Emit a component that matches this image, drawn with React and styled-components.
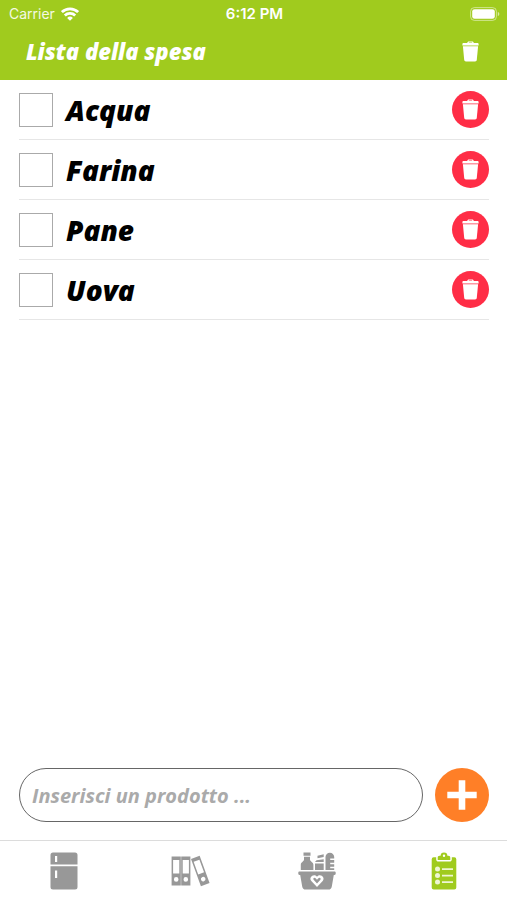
import { useState } from 'react';
import styled, { createGlobalStyle, css } from 'styled-components';

const colors = {
  green: '#a0cb1e',
  red: '#ff2d46',
  orange: '#ff7f27',
  gray: '#989898',
  line: '#e6e6e6',
};

const initialProducts = ['Acqua', 'Farina', 'Pane', 'Uova'];

const TrashIcon = () => (
  <svg width="21" height="21" viewBox="0 0 21 21" fill="currentColor" aria-hidden="true">
    <path d="M7.2 2C7.2.9 8 .4 8.8.4h3.4c.8 0 1.6.5 1.6 1.6h3.6c.8 0 1.2.4 1.2 1.1v1.3H2.4V3.1c0-.7.4-1.1 1.2-1.1zM8.6 2h3.8c0-.4-.3-.6-.6-.6H9.2c-.3 0-.6.2-.6.6z" />
    <path d="M2.9 5.2h15.2l-1.3 13.6c-.1 1-.8 1.6-1.7 1.6H5.9c-.9 0-1.6-.6-1.7-1.6z" />
  </svg>
);

const WifiIcon = () => (
  <svg width="18" height="14" viewBox="0 0 18 14" fill="none" stroke="#fff" strokeWidth="2.8" aria-hidden="true">
    <path d="M.9 5.1a11.6 11.6 0 0 1 16.2 0" />
    <path d="M3.8 8.4a7.5 7.5 0 0 1 10.4 0" />
    <path d="M9 13.8 6.1 11a4.1 4.1 0 0 1 5.8 0z" fill="#fff" stroke="none" />
  </svg>
);

const BatteryIcon = () => (
  <svg width="30" height="14" viewBox="0 0 30 14" fill="none" aria-hidden="true">
    <rect x=".6" y=".6" width="25.8" height="12.8" rx="3.8" stroke="#fff" strokeOpacity=".5" />
    <rect x="2.2" y="2.2" width="22.6" height="9.6" rx="2.4" fill="#fff" />
    <path d="M27.8 5v4c1-.4 1.5-1.1 1.5-2s-.5-1.6-1.5-2z" fill="#fff" fillOpacity=".6" />
  </svg>
);

const PlusIcon = () => (
  <svg width="30" height="30" viewBox="0 0 30 30" fill="currentColor" aria-hidden="true">
    <path d="M11.7.3h6.6v11.4h11.4v6.6H18.3v11.4h-6.6V18.3H.3v-6.6h11.4z" />
  </svg>
);

const FridgeIcon = () => (
  <svg width="40" height="40" viewBox="0 0 40 40" fill="currentColor" aria-hidden="true">
    <path fillRule="evenodd" d="M10 1.5h22A2.5 2.5 0 0 1 34.5 4v9.6h-27V4A2.5 2.5 0 0 1 10 1.5zM12 5v6h2.2V5z" />
    <path fillRule="evenodd" d="M7.5 15.2h27V36a2.5 2.5 0 0 1-2.5 2.5H10A2.5 2.5 0 0 1 7.5 36zM12 19.5V27h2.2v-7.5z" />
  </svg>
);

const Binder = ({ transform }) => (
  <g transform={transform}>
    <path
      fillRule="evenodd"
      d="M0 0h9.2v29H0zM1.5 3.5V17h6.2V3.5zM4.6 20.7a2.3 2.3 0 1 0 0 4.6 2.3 2.3 0 0 0 0-4.6z"
    />
  </g>
);

const BindersIcon = () => (
  <svg width="40" height="40" viewBox="0 0 40 40" fill="currentColor" aria-hidden="true">
    <Binder transform="translate(1.6 5.4)" />
    <Binder transform="translate(11.2 5.4)" />
    <Binder transform="translate(21 8) rotate(-20)" />
  </svg>
);

const BasketIcon = () => (
  <svg width="40" height="40" viewBox="0 0 40 40" fill="currentColor" aria-hidden="true">
    <path d="M6.5 1.5h7v3.2h-7zM7 5.8h6v2.9c0 1.7 3.4 2.3 3.4 5V19H3.8v-5.3C3.8 11 7 10.4 7 8.700z" />
    <path d="M18 12.5h8.7V19H18zM19.5 9.3l7.2-1.100v2.700H18zM20.500 4.700l6.200-1.400v2.600l-6.200 1.400z" />
    <path d="M28.500 19V6a4.300 4.300 0 0 1 8.700 0v1.600h-4v1.500h4v2.600h-4v1.500h4v2.600h-4v1.400h4V19z" />
    <path
      fillRule="evenodd"
      d="M2.500 20.500h35c.7 0 1.200.5 1.200 1.100v1.200c0 .6-.5 1.100-1.200 1.100h-.7l-2 11.500a3.600 3.600 0 0 1-3.600 3.100H8.800a3.600 3.600 0 0 1-3.600-3.100l-2-11.500h-.7c-.7 0-1.200-.5-1.200-1.100v-1.200c0-.6.5-1.100 1.200-1.100zM20 36l5.700-6.100c3-3.200-2.300-8-5.700-4.200-3.400-3.800-8.700 1-5.700 4.200z"
    />
    <path d="M20 32.500l-3.400-3.800c-1-1.400 1-2.800 2.200-1.300l1.200 1.400 1.200-1.400c1.200-1.500 3.200-.1 2.200 1.300z" />
  </svg>
);

const ListIcon = () => (
  <svg width="40" height="40" viewBox="0 0 40 40" aria-hidden="true">
    <path
      fill="currentColor"
      d="M9.7 6.3h2.5v2.2c0 1.3.9 2.1 2.3 2.1h11c1.4 0 2.3-.8 2.3-2.1V6.300h2.5a2 2 0 0 1 2 2v28.200a2 2 0 0 1-2 2H9.700a2 2 0 0 1-2-2V8.300a2 2 0 0 1 2-2z"
    />
    <path
      fill="currentColor"
      fillRule="evenodd"
      d="M13.7 9V6.700c0-1.200.7-1.900 1.900-1.900h1a3.400 3.400 0 0 1 6.800 0h1c1.200 0 1.900.7 1.900 1.900V9zM20 3.500a1.200 1.200 0 1 0 0 2.400 1.200 1.200 0 0 0 0-2.400z"
    />
    <g fill="#eef6d3">
      <circle cx="13.5" cy="18" r="2.5" />
      <circle cx="13.5" cy="24.5" r="2.5" />
      <circle cx="13.5" cy="31" r="2.5" />
      <path d="M18 17.2h11v1.700H18zM18 23.700h11v1.700H18zM18 30.200h11v1.700H18z" />
    </g>
  </svg>
);

const tabs = [
  { id: 'frigo', label: 'Frigo', Icon: FridgeIcon },
  { id: 'archivio', label: 'Archivio', Icon: BindersIcon },
  { id: 'dispensa', label: 'Dispensa', Icon: BasketIcon },
  { id: 'spesa', label: 'Lista della spesa', Icon: ListIcon },
];

const App = () => {
  const [products, setProducts] = useState(initialProducts);
  const [text, setText] = useState('');
  const [activeTab, setActiveTab] = useState('spesa');

  const onSubmit = event => {
    event.preventDefault();
    const name = text.trim();
    if (name && !products.includes(name)) {
      setProducts([...products, name]);
    }
    setText('');
  };

  const onDeleteClick = name => {
    setProducts(products.filter(product => product !== name));
  };

  return (
    <Screen>
      <GlobalStyle />
      <Header>
        <StatusBar>
          <Carrier>
            Carrier <WifiIcon />
          </Carrier>
          <Clock>6:12 PM</Clock>
          <Battery>
            <BatteryIcon />
          </Battery>
        </StatusBar>
        <TitleBar>
          <Title>Lista della spesa</Title>
          <ClearButton type="button" aria-label="Svuota la lista" onClick={() => setProducts([])}>
            <TrashIcon />
          </ClearButton>
        </TitleBar>
      </Header>

      <List>
        {products.map(name => (
          <Row key={name}>
            <Product>
              <Checkbox type="checkbox" />
              {name}
            </Product>
            <RoundButton
              type="button"
              aria-label={`Elimina ${name}`}
              $size={37}
              $color={colors.red}
              onClick={() => onDeleteClick(name)}
            >
              <TrashIcon />
            </RoundButton>
          </Row>
        ))}
      </List>

      <AddForm onSubmit={onSubmit}>
        <ProductInput
          type="text"
          aria-label="Prodotto"
          placeholder="Inserisci un prodotto ..."
          value={text}
          onChange={event => setText(event.target.value)}
        />
        <RoundButton type="submit" aria-label="Aggiungi" $size={54} $color={colors.orange}>
          <PlusIcon />
        </RoundButton>
      </AddForm>

      <TabBar>
        {tabs.map(({ id, label, Icon }) => (
          <Tab key={id} type="button" aria-label={label} $active={id === activeTab} onClick={() => setActiveTab(id)}>
            <Icon />
          </Tab>
        ))}
      </TabBar>
    </Screen>
  );
};

const GlobalStyle = createGlobalStyle`
  *,
  *::before,
  *::after {
    box-sizing: border-box;
  }

  body {
    background-color: #fff;
    color: #000;
    margin: 0;
  }

  button {
    background: none;
    border: 0;
    cursor: pointer;
    padding: 0;
  }

  svg {
    display: block;
    flex-shrink: 0;
  }
`;

const displayFont = css`
  font-family: 'Open Sans', 'Noto Sans', sans-serif;
  font-style: italic;
  font-weight: 800;
`;

const Screen = styled.div`
  display: flex;
  flex-direction: column;
  min-height: 100vh;
`;

const Header = styled.header`
  background-color: ${colors.green};
  color: #fff;
  padding-bottom: 5px;
`;

const StatusBar = styled.div`
  align-items: center;
  display: grid;
  font-family: Inter, 'Liberation Sans', sans-serif;
  font-size: 14px;
  grid-template-columns: 1fr auto 1fr;
  height: 27px;
  line-height: 20px;
  padding: 0 7px 0 9px;
`;

const Carrier = styled.span`
  align-items: center;
  color: #f4f9e4;
  display: flex;
  gap: 6px;
`;

const Clock = styled.span`
  font-size: 15px;
  font-weight: 600;
`;

const Battery = styled.span`
  justify-self: end;
`;

const TitleBar = styled.div`
  align-items: center;
  display: flex;
  height: 48px;
  justify-content: space-between;
  padding: 0 26px;
`;

const Title = styled.h1`
  ${displayFont}
  font-size: 22px;
  line-height: 30px;
  margin: 0;
`;

const ClearButton = styled.button`
  color: #fff;
`;

const List = styled.ul`
  flex: 1;
  list-style: none;
  margin: 0;
  padding: 0 18px 0 19px;
`;

const Row = styled.li`
  align-items: center;
  border-bottom: 1px solid ${colors.line};
  display: flex;
  height: 60px;
  justify-content: space-between;
`;

const Product = styled.label`
  ${displayFont}
  align-items: center;
  display: flex;
  flex: 1;
  font-size: 28px;
  gap: 13px;
  line-height: 36px;
`;

const Checkbox = styled.input`
  appearance: none;
  background-color: #fff;
  border: 1px solid #aaa;
  height: 34px;
  margin: 0;
  width: 34px;

  &:checked {
    background-color: ${colors.green};
  }
`;

const RoundButton = styled.button`
  ${props => css`
    align-items: center;
    background-color: ${props.$color};
    border-radius: 50%;
    color: #fff;
    display: flex;
    flex-shrink: 0;
    height: ${props.$size}px;
    justify-content: center;
    width: ${props.$size}px;
  `}
`;

const AddForm = styled.form`
  display: flex;
  gap: 12px;
  padding: 18px 18px 18px 19px;
`;

const ProductInput = styled.input`
  ${displayFont}
  background-color: #fff;
  border: 1px solid #666;
  border-radius: 27px;
  color: #000;
  flex: 1;
  font-size: 20px;
  font-weight: 700;
  height: 54px;
  min-width: 0;
  padding: 0 12px;

  &::placeholder {
    color: #aaa;
    opacity: 1;
  }
`;

const TabBar = styled.nav`
  border-top: 1px solid #dcdcdc;
  display: grid;
  grid-template-columns: repeat(4, 1fr);
  height: 60px;
`;

const Tab = styled.button`
  align-items: center;
  color: ${props => (props.$active ? colors.green : colors.gray)};
  display: flex;
  justify-content: center;
`;

export default App;
